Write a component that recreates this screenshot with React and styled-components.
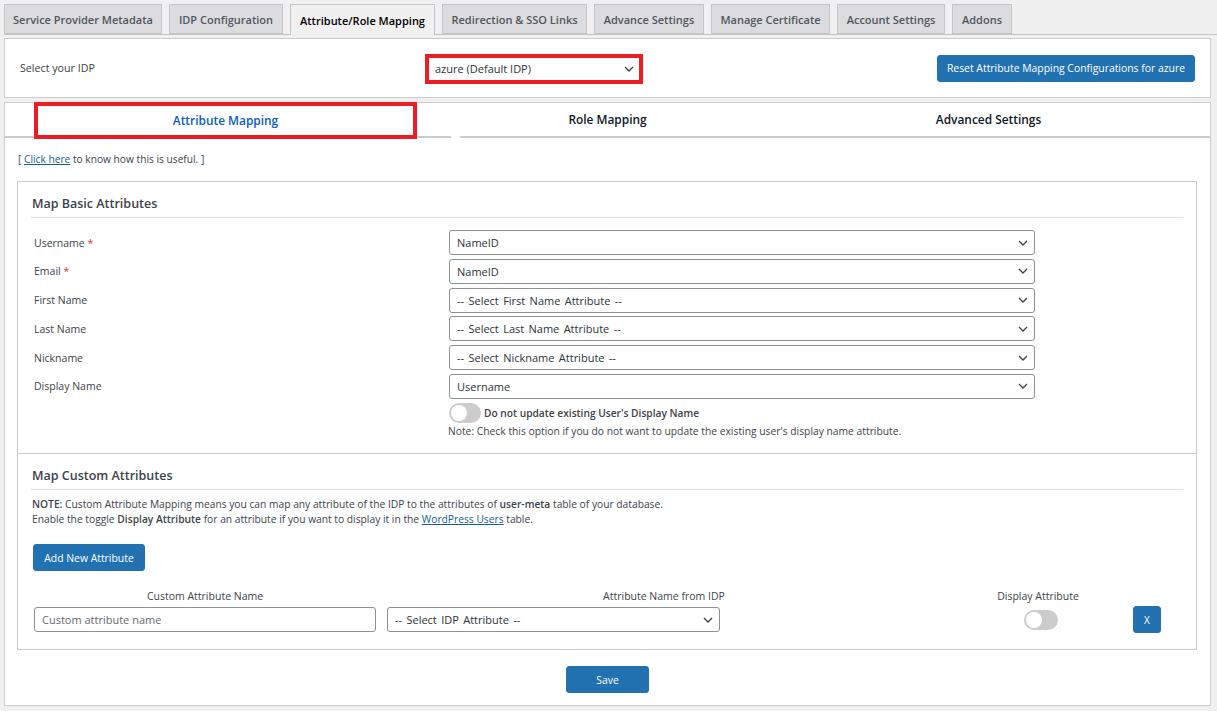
import React from "react";
import styled, { createGlobalStyle } from "styled-components";

const Global = createGlobalStyle`
  html, body { margin: 0; padding: 0; background: #f0f0f1; }
  body { font-family: "Open Sans", "Noto Sans", sans-serif; font-size: 10.5px; color: #3c434a; }
  * { box-sizing: border-box; }
`;

const Page = styled.div`
  width: 1217px;
  height: 711px;
  padding: 4px 6px 0 4px;
  overflow: hidden;
`;
const TabBar = styled.nav`
  display: flex;
  gap: 7px;
  height: 30.5px;
  border-bottom: 1px solid #c3c4c7;
  margin-right: -6px;
`;
const Tab = styled.a`
  display: flex;
  align-items: center;
  justify-content: center;
  width: ${(p) => p.$w}px;
  height: ${(p) => (p.$active ? 31 : 30)}px;
  font-size: 11px;
  font-weight: 600;
  color: ${(p) => (p.$active ? "#000" : "#50575e")};
  background: ${(p) => (p.$active ? "#f0f0f1" : "#dcdcde")};
  border: 1px solid #c3c4c7;
  border-bottom: ${(p) => (p.$active ? "none" : "1px solid #c3c4c7")};
  white-space: nowrap;
`;
const Panel = styled.section`
  background: #fff;
  border: 1px solid #ccc;
`;
const IdpPanel = styled(Panel)`
  display: grid;
  grid-template-columns: 405px 218px 1fr;
  align-items: center;
  height: 60px;
  margin-top: 3.5px;
  padding: 0 15px;
`;
const IdpLabel = styled.span`
  font-size: 10.7px;
`;
const SelectWrap = styled.div`
  position: relative;
  width: ${(p) => p.$w}px;
  height: ${(p) => p.$h || 25}px;
  margin-top: ${(p) => p.$top || 0}px;
`;
const Select = styled.select`
  appearance: none;
  display: block;
  width: 100%;
  height: 100%;
  padding: 0 24px 0 7px;
  font: inherit;
  font-size: 11px;
  word-spacing: 1.5px;
  color: #2c3338;
  background: #fff;
  border: 1px solid #8c8f94;
  border-radius: 3px;
  outline: none;
`;
const RedSelect = styled(Select)`
  border: 4px solid #ed1c24;
  border-radius: 0;
  padding-left: 6px;
  word-spacing: 0;
`;
const Chevron = styled.svg`
  position: absolute;
  top: 50%;
  right: ${(p) => p.$right || 7}px;
  width: 10px;
  height: 6px;
  margin-top: -3px;
  pointer-events: none;
  fill: none;
  stroke: #3c434a;
  stroke-width: 1.3;
`;
const Button = styled.button`
  height: 27px;
  width: ${(p) => p.$w}px;
  padding: 0;
  font: inherit;
  font-size: 10.4px;
  font-weight: 500;
  color: #fff;
  background: #2271b1;
  border: 1px solid #2271b1;
  border-radius: 3px;
  white-space: nowrap;
`;
const ResetButton = styled(Button)`
  justify-self: end;
`;
const MainPanel = styled(Panel)`
  height: 604px;
  margin-top: 4px;
`;
const SubTabs = styled.div`
  position: relative;
  display: flex;
  height: 35px;
  padding-left: 29px;
  &::before,
  &::after {
    content: "";
    position: absolute;
    bottom: 0;
    height: 2px;
    background: #ccc;
  }
  &::before {
    left: 0;
    width: 446px;
  }
  &::after {
    left: 455px;
    right: 0;
  }
`;
const SubTab = styled.a`
  display: flex;
  align-items: center;
  justify-content: center;
  flex: 0 0 ${(p) => p.$w}px;
  height: ${(p) => (p.$active ? 37 : 33)}px;
  margin-top: ${(p) => (p.$active ? -1 : 0)}px;
  padding-bottom: 1px;
  font-size: 11.9px;
  font-weight: 600;
  color: ${(p) => (p.$active ? "#0b5cc0" : "#101828")};
  border: ${(p) => (p.$active ? "4px solid #ed1c24" : "none")};
  position: relative;
  z-index: 1;
`;
const Help = styled.p`
  margin: 0;
  padding: 13px 0 0 13px;
  height: 43px;
  font-size: 10.2px;
  line-height: 16px;
`;
const Link = styled.a`
  color: #135e96;
  text-decoration: underline;
`;
const Box = styled.div`
  height: 469px;
  margin: 0 13px 0 12px;
  border: 1px solid #ccc;
`;
const Section = styled.div`
  padding: 13px 13px 0;
  height: ${(p) => p.$h}px;
  border-bottom: ${(p) => (p.$sep ? "1px solid #ccc" : "none")};
`;
const Heading = styled.h3`
  margin: 0;
  height: 23px;
  font-size: 12.5px;
  line-height: 17px;
  font-weight: 600;
  color: #3c434a;
  border-bottom: 1px solid #ddd;
  padding-left: 1px;
`;
const Rows = styled.div`
  display: flex;
  flex-direction: column;
  gap: 3.8px;
  margin-top: 12px;
`;
const Row = styled.div`
  display: grid;
  grid-template-columns: 418px 586px;
  align-items: center;
  height: 25px;
`;
const RowLabel = styled.label`
  padding-left: 3px;
  font-size: 10.5px;
`;
const Req = styled.span`
  color: #d63638;
`;
const ToggleRow = styled.div`
  display: flex;
  align-items: center;
  gap: 3px;
  margin: 4px 0 0 418px;
  font-size: 10.2px;
  font-weight: 600;
`;
const Toggle = styled.span`
  position: relative;
  display: block;
  flex: none;
  width: ${(p) => p.$w || 32}px;
  height: 20px;
  border-radius: 10px;
  background: #ccc;
  &::before {
    content: "";
    position: absolute;
    left: 2px;
    top: 2px;
    width: 16px;
    height: 16px;
    border-radius: 50%;
    background: #fff;
  }
`;
const Note = styled.p`
  margin: 1px 0 0 417px;
  font-size: 10.3px;
  line-height: 14px;
`;
const Paragraph = styled.p`
  margin: 7px 0 0;
  padding-left: 1px;
  font-size: 10.25px;
  line-height: 15px;
  b { font-weight: 600; }
`;
const AddButton = styled(Button)`
  display: block;
  margin: 17px 0 0 2px;
`;
const HeadGrid = styled.div`
  display: grid;
  grid-template-columns: 342px 11px 554px 194px;
  height: 20px;
  margin: 15px 0 0 3px;
`;
const ColHead = styled.div`
  grid-column: ${(p) => p.$col};
  text-align: center;
  font-size: 10.5px;
  font-weight: 500;
  line-height: 20px;
  white-space: nowrap;
`;
const AttrRow = styled.div`
  display: grid;
  grid-template-columns: 342px 11px 333px 304px 34px 75px 28px;
  height: 27px;
  margin-left: 3px;
  align-items: center;
`;
const TextInput = styled.input`
  width: 100%;
  height: 25px;
  padding: 0 7px;
  font: inherit;
  font-size: 11px;
  color: #2c3338;
  border: 1px solid #8c8f94;
  border-radius: 3px;
  outline: none;
  &::placeholder { color: #646970; opacity: 1; }
`;
const XButton = styled(Button)`
  font-size: 10px;
`;
const Footer = styled.div`
  display: flex;
  justify-content: center;
  padding-top: 16px;
`;

const Arrow = ({ right }) => (
  <Chevron viewBox="0 0 10 6" $right={right}>
    <path d="M1 1l4 4 4-4" />
  </Chevron>
);

const tabs = [
  ["Service Provider Metadata", 158],
  ["IDP Configuration", 114],
  ["Attribute/Role Mapping", 145],
  ["Redirection & SSO Links", 145],
  ["Advance Settings", 110],
  ["Manage Certificate", 119],
  ["Account Settings", 108],
  ["Addons", 60],
];

const rows = [
  ["Username", true, "NameID"],
  ["Email", true, "NameID"],
  ["First Name", false, "-- Select First Name Attribute --"],
  ["Last Name", false, "-- Select Last Name Attribute --"],
  ["Nickname", false, "-- Select Nickname Attribute --"],
  ["Display Name", false, "Username"],
];

export default function App() {
  return (
    <Page>
      <Global />
      <TabBar>
        {tabs.map(([t, w]) => (
          <Tab key={t} $w={w} $active={t === "Attribute/Role Mapping"}>{t}</Tab>
        ))}
      </TabBar>
      <IdpPanel>
        <IdpLabel>Select your IDP</IdpLabel>
        <SelectWrap $w={218} $h={30} $top={1}>
          <RedSelect defaultValue="azure"><option value="azure">azure (Default IDP)</option></RedSelect>
          <Arrow right={9} />
        </SelectWrap>
        <ResetButton $w={258}>Reset Attribute Mapping Configurations for azure</ResetButton>
      </IdpPanel>
      <MainPanel>
        <SubTabs>
          <SubTab $w={383} $active>Attribute Mapping</SubTab>
          <SubTab $w={381}>Role Mapping</SubTab>
          <SubTab $w={381}>Advanced Settings</SubTab>
        </SubTabs>
        <Help>[ <Link>Click here</Link> to know how this is useful. ]</Help>
        <Box>
          <Section $sep $h={272}>
            <Heading>Map Basic Attributes</Heading>
            <Rows>
              {rows.map(([label, req, value]) => (
                <Row key={label}>
                  <RowLabel>{label}{req && <Req> *</Req>}</RowLabel>
                  <SelectWrap $w={586}>
                    <Select defaultValue={value}><option>{value}</option></Select>
                    <Arrow />
                  </SelectWrap>
                </Row>
              ))}
            </Rows>
            <ToggleRow><Toggle />Do not update existing User's Display Name</ToggleRow>
            <Note>Note: Check this option if you do not want to update the existing user's display name attribute.</Note>
          </Section>
          <Section $h={195}>
            <Heading>Map Custom Attributes</Heading>
            <Paragraph>
              <b>NOTE:</b> Custom Attribute Mapping means you can map any attribute of the IDP to the attributes of <b>user-meta</b> table of your database.<br />
              Enable the toggle <b>Display Attribute</b> for an attribute if you want to display it in the <Link>WordPress Users</Link> table.
            </Paragraph>
            <AddButton $w={112}>Add New Attribute</AddButton>
            <HeadGrid>
              <ColHead $col="1">Custom Attribute Name</ColHead>
              <ColHead $col="3">Attribute Name from IDP</ColHead>
              <ColHead $col="4">Display Attribute</ColHead>
            </HeadGrid>
            <AttrRow>
              <TextInput placeholder="Custom attribute name" />
              <span />
              <SelectWrap $w={333}>
                <Select defaultValue="x"><option value="x">-- Select IDP Attribute --</option></Select>
                <Arrow />
              </SelectWrap>
              <span />
              <Toggle $w={34} />
              <span />
              <XButton $w={28}>X</XButton>
            </AttrRow>
          </Section>
        </Box>
        <Footer><Button $w={83}>Save</Button></Footer>
      </MainPanel>
    </Page>
  );
}
